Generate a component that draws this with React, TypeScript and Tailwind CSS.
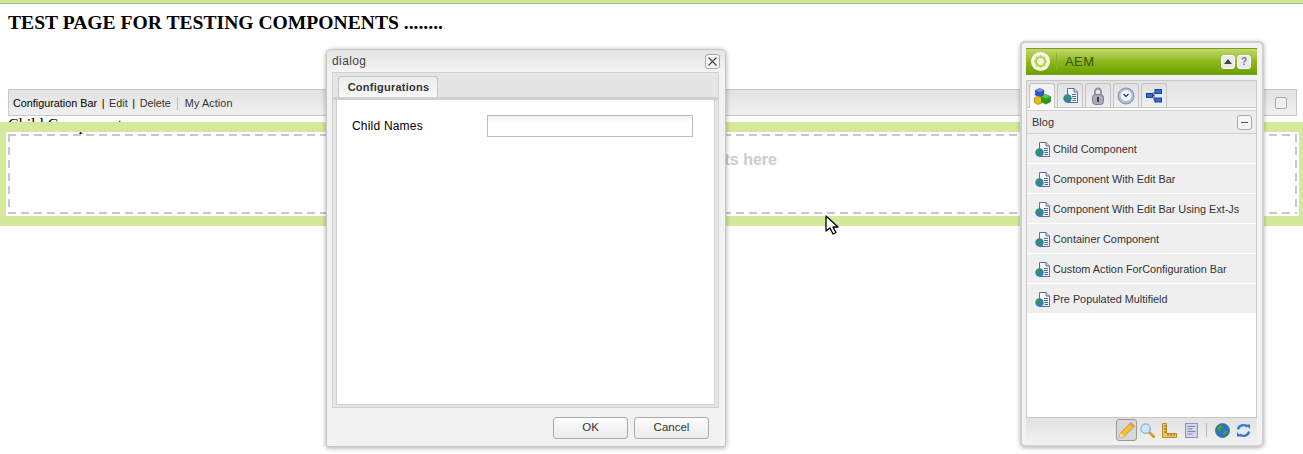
const sans = "font-['Liberation_Sans',Arial,sans-serif]";

function PageGlobe() {
    return (
        <svg width="15" height="15" viewBox="0 0 15 15" className="shrink-0">
            <path d="M4.500.5h6.500l3.500 3.500v10.500h-10z" fill="#f4f7fc" stroke="#5a6f9c" />
            <path d="M11 .5v3.500h3.500" fill="#cdd8ea" stroke="#5a6f9c" />
            <path d="M9 6.500h4M9 8.500h4M9.500 10.500h3.500M9.500 12.500h3.500" stroke="#4c6492" />
            <circle cx="4.500" cy="10.500" r="4.200" fill="#2f7fc4" />
            <path d="M2 8c1.500-1.200 3-.8 4 .2s0 1.800-1 1.800-.8 2-1.800 2-2-2.500-1.200-4zM6 12.500c.8-.8 1.600-1 2.300-.5-.5 1.300-1.300 2.300-2.300 2.500z" fill="#3c9a2e" />
        </svg>
    );
}

function Cubes() {
    return (
        <svg width="17" height="17" viewBox="0 0 18 18">
            <path d="M6 .5 10.500 2.500v5L6 9.500 1.500 7.500v-5z" fill="#2f55c4" stroke="#1f2f7a" strokeWidth=".6" />
            <path d="M1.500 2.500 6 4.500l4.500-2L6 .5z" fill="#6f8fe8" />
            <path d="M4.500 8.500l4.500 2v5l-4.500 2-4-2v-5z" fill="#e8b90f" stroke="#8a6a08" strokeWidth=".6" />
            <path d="M12.500 7 17.500 9v5.500L12.500 17 8 14.500V9z" fill="#2a9c1f" stroke="#14600f" strokeWidth=".6" />
            <path d="M8 9l4.500 2.200L17.500 9l-5-2z" fill="#5ccb4a" />
        </svg>
    );
}

function Lock() {
    return (
        <svg width="12" height="18" viewBox="0 0 12 18">
            <path d="M3 8V4.500a3 3 0 0 1 6 0V8" fill="none" stroke="#8f8f9c" strokeWidth="1.800" />
            <rect x=".5" y="7.500" width="11" height="10" rx="3" fill="#a9a9bb" stroke="#7c7c92" />
            <rect x="5" y="10" width="2" height="5" fill="#3d3d4a" />
        </svg>
    );
}

function Clock() {
    return (
        <svg width="18" height="18" viewBox="0 0 18 18">
            <circle cx="9" cy="9" r="8" fill="#a8bfdb" stroke="#7e93ad" />
            <circle cx="9" cy="8.500" r="5.500" fill="#f2f6fb" />
            <path d="M6.500 7 9 9.500 11.500 7" fill="none" stroke="#27374e" strokeWidth="1.200" />
        </svg>
    );
}

function Network() {
    return (
        <svg width="16" height="14" viewBox="0 0 16 14">
            <path d="M5 6.500h3M8 3v8h2" fill="none" stroke="#1d3f8f" />
            <rect x=".5" y="4.500" width="6" height="4" fill="#2d6fd8" stroke="#174099" />
            <rect x="9" y=".5" width="6.500" height="4" fill="#2d6fd8" stroke="#174099" />
            <rect x="9" y="9" width="6.500" height="4" fill="#2d6fd8" stroke="#174099" />
        </svg>
    );
}

function AemLogo() {
    return (
        <svg width="19" height="19" viewBox="0 0 19 19" className="shrink-0">
            <circle cx="9.500" cy="9.500" r="9.500" fill="#f6f9e8" />
            <circle cx="9.500" cy="9.500" r="5.500" fill="#b4d055" />
            <circle cx="9.500" cy="9.500" r="3.500" fill="#f2f7dc" />
            <path d="M9.500 3v3M9.500 13v3M3 9.500h3M13 9.500h3M5 5l2 2M12 12l2 2M14 5l-2 2M7 12l-2 2" stroke="#b4d055" strokeWidth="1.800" />
        </svg>
    );
}

function Pencil() {
    return (
        <svg width="18" height="18" viewBox="0 0 18 18">
            <path d="M1 17l1.500-5L13 1.500 16.500 5 6 15.500z" fill="#f2c230" stroke="#b98a1a" strokeWidth=".8" />
            <path d="M1 17l1.500-5L6 15.500z" fill="#f6e0b8" />
            <path d="M13 1.500 16.500 5 15 6.500 11.500 3z" fill="#ea8f7a" />
        </svg>
    );
}

function Magnifier() {
    return (
        <svg width="15" height="15" viewBox="0 0 16 16">
            <path d="M9 9l6 6" stroke="#dd9a2a" strokeWidth="3" strokeLinecap="round" />
            <circle cx="6" cy="6" r="5" fill="#cfe6f7" stroke="#8fabc6" strokeWidth="1.300" />
        </svg>
    );
}

function Ruler() {
    return (
        <svg width="15" height="15" viewBox="0 0 15 15">
            <path d="M.5.500h4v10h10v4H.5z" fill="#ecc95e" stroke="#b08a2c" />
            <path d="M2 3h2.500M2 6h2.500M2 9h2.500M6 11v2M9 11v2M12 11v2" stroke="#8a6510" />
        </svg>
    );
}

function Doc() {
    return (
        <svg width="13" height="15" viewBox="0 0 13 15">
            <rect x=".5" y=".5" width="12" height="14" fill="#d4d8ea" stroke="#8d94b8" />
            <path d="M2.500 3.500h8M2.500 6h5M2.500 8.500h8M2.500 11h5" stroke="#7f86a8" />
        </svg>
    );
}

function Globe() {
    return (
        <svg width="15" height="15" viewBox="0 0 16 16">
            <circle cx="8" cy="8" r="7.500" fill="#2a75c7" stroke="#1a4f93" strokeWidth=".6" />
            <path d="M3 4c2-2 4-2 5-1s0 3-1 3-1 3-2 3-3-3-2-5zM9 9c2-1 4-1 5 0-1 3-3 4-4 4s-2-3-1-4z" fill="#46a032" />
        </svg>
    );
}

function Refresh() {
    return (
        <svg width="15" height="15" viewBox="0 0 16 16" fill="none" stroke="#2e7ad1" strokeWidth="2.400">
            <path d="M2 7a6 6 0 0 1 10-3" />
            <path d="M14 9a6 6 0 0 1-10 3" />
            <path d="M10 1.500h5v5z" fill="#2e7ad1" stroke="none" />
            <path d="M6 14.500H1v-5z" fill="#2e7ad1" stroke="none" />
        </svg>
    );
}

function SmallButton({ children }: { children: React.ReactNode }) {
    return (
        <span className="flex items-center justify-center w-[14px] h-[14px] rounded-[3px] border border-[#fff] bg-[#e9e9e9] text-[#555]">
            {children}
        </span>
    );
}

function Tab({ active, children }: { active?: boolean; children: React.ReactNode }) {
    return (
        <div
            className={
                active
                    ? "flex items-center justify-center w-[26px] h-[25px] -mb-px rounded-t-[3px] border border-b-0 border-[#c4c4c4] bg-gradient-to-b from-[#f0f0f0] to-[#ffffff]"
                    : "flex items-center justify-center w-[26px] h-[24px] rounded-t-[3px] border border-b-0 border-[#c4c4c4] bg-gradient-to-b from-[#e2e2e2] to-[#efefef]"
            }
        >
            {children}
        </div>
    );
}

function Dialog() {
    return (
        <div className={`absolute left-[326px] top-[49px] w-[400px] h-[398px] flex flex-col rounded-t-[5px] rounded-b-[2px] border border-[#c6c6c6] bg-[#f2f2f2] shadow-[0_1px_5px_rgba(0,0,0,0.35)] ${sans}`}>
            <div className="flex shrink-0 items-center justify-between h-[22px] px-[5px] bg-gradient-to-b from-[#e4e4e4] to-[#f4f4f4] rounded-t-[5px]">
                <span className="text-[12px] text-[#444] tracking-[0.4px]">dialog</span>
                <span className="flex items-center justify-center w-[15px] h-[15px] rounded-[3px] border border-[#aaa] bg-[#f4f4f4]">
                    <svg width="9" height="9" viewBox="0 0 9 9">
                        <path d="M.5.500l8 8M8.500.500l-8 8" stroke="#444" strokeWidth="1.100" />
                    </svg>
                </span>
            </div>
            <div className="flex flex-col flex-1 ml-[5px] mr-[6px] border border-[#d2d2d2] bg-[#e5e5e5]">
                <div className="flex shrink-0 h-[27px] pl-[5px] pt-[3px] border-b-[3px] border-[#d0d0d0]">
                    <div className="flex items-center justify-center w-[100px] h-[21px] pl-px rounded-t-[3px] border border-b-0 border-[#c6c6c6] bg-gradient-to-b from-[#eeeeee] to-[#f8f8f8] text-[11px] font-bold tracking-[0.25px] text-[#333]">
                        Configurations
                    </div>
                </div>
                <div className="flex flex-1 items-start mx-[3px] mb-[2px] border-x border-b border-[#d0d0d0] bg-white pt-[15px] pl-[15px]">
                    <label className="w-[135px] pt-[2px] text-[12px] tracking-[0.2px] text-black">Child Names</label>
                    <div className="w-[206px] h-[22px] border border-[#bdbdbd] bg-gradient-to-b from-[#efefef] to-[#ffffff] to-30%" />
                </div>
            </div>
            <div className="flex shrink-0 justify-end gap-[6px] h-[38px] pt-[9px] pr-[16px]">
                <button className="w-[75px] h-[22px] rounded-[3px] border border-[#aaa] bg-gradient-to-b from-[#fbfbfb] to-[#ececec] text-[11.500px] text-[#333]">OK</button>
                <button className="w-[75px] h-[22px] rounded-[3px] border border-[#aaa] bg-gradient-to-b from-[#fbfbfb] to-[#ececec] text-[11.500px] text-[#333]">Cancel</button>
            </div>
        </div>
    );
}

const components = [
    "Child Component",
    "Component With Edit Bar",
    "Component With Edit Bar Using Ext-Js",
    "Container Component",
    "Custom Action ForConfiguration Bar",
    "Pre Populated Multifield",
];

function Sidekick() {
    return (
        <div className={`absolute left-[1020px] top-[41px] w-[244px] h-[406px] flex flex-col rounded-[5px] border-2 border-[#cfcfcf] bg-[#f2f2f2] pl-[4px] pr-[5px] pt-[5px] shadow-[0_1px_4px_rgba(0,0,0,0.3)] ${sans}`}>
            <div className="flex shrink-0 items-center h-[27px] pl-[5px] pr-[6px] border-y border-[#7a9a24] bg-gradient-to-b from-[#c2d968] via-[#8fb81a] via-50% to-[#6d9f00]">
                <AemLogo />
                <span className="ml-[6px] w-px h-[17px] bg-[#8fae35]" />
                <span className="ml-[8px] flex-1 text-[13px] tracking-[0.4px] text-[#2f5600]">AEM</span>
                <div className="flex gap-[2px]">
                    <SmallButton>
                        <svg width="8" height="5" viewBox="0 0 8 5">
                            <path d="M0 5l4-5 4 5z" fill="#444" />
                        </svg>
                    </SmallButton>
                    <SmallButton>
                        <span className="text-[10px] font-bold leading-none text-[#777]">?</span>
                    </SmallButton>
                </div>
            </div>
            <div className="flex flex-col shrink-0 mt-[5px] h-[337px] border-x border-t border-[#c8c8c8] bg-white">
                <div className="flex shrink-0 items-end gap-[2px] h-[27px] pl-[2px] bg-gradient-to-b from-[#e4e4e4] to-[#ededed] border-b border-[#c8c8c8]">
                    <Tab active><Cubes /></Tab>
                    <Tab><PageGlobe /></Tab>
                    <Tab><Lock /></Tab>
                    <Tab><Clock /></Tab>
                    <Tab><Network /></Tab>
                </div>
                <div className="flex shrink-0 items-center justify-between h-[24px] mt-[2px] pl-[5px] pr-[4px] border-y border-[#d0d0d0] bg-[#ececec] text-[11px] text-[#333]">
                    <span>Blog</span>
                    <span className="flex items-center justify-center w-[15px] h-[15px] rounded-[3px] border border-[#aaa] bg-[#f6f6f6]">
                        <span className="block w-[7px] h-px bg-[#555]" />
                    </span>
                </div>
                <ul className="bg-white">
                    {components.map((name) => (
                        <li key={name} className="flex items-center gap-[3px] h-[30px] pl-[8px] pt-px border-b border-white bg-[#efefef] text-[10.850px] text-[#333]">
                            <PageGlobe />
                            <span>{name}</span>
                        </li>
                    ))}
                </ul>
            </div>
            <div className="flex shrink-0 items-center justify-end h-[25px] pr-[6px] border-t border-[#c8c8c8] bg-gradient-to-b from-[#e2e2e2] to-[#f0f0f0]">
                <span className="flex items-center justify-center w-[21px] h-[22px] rounded-[3px] border border-[#999] bg-[#d8d8d8]"><Pencil /></span>
                <span className="ml-[3px]"><Magnifier /></span>
                <span className="ml-[7px]"><Ruler /></span>
                <span className="ml-[8px]"><Doc /></span>
                <span className="mx-[8px] w-px h-[14px] bg-[#bbb]" />
                <Globe />
                <span className="ml-[6px]"><Refresh /></span>
            </div>
        </div>
    );
}

export default function App() {
    return (
        <div className="relative w-[1303px] h-[454px] overflow-hidden bg-white">
            <div className="h-[4px] bg-[#cfe891] border-b border-[#a9b58a]" />
            <h1 className="mt-[8px] ml-[8px] font-['Liberation_Serif',serif] text-[19.600px] leading-[22px] font-bold text-black">
                TEST PAGE FOR TESTING COMPONENTS ........
            </h1>
            <div className={`flex items-center justify-between mt-[55px] ml-[8px] mr-[6px] h-[27px] pl-[4px] pr-[9px] border border-[#c8c8c8] bg-gradient-to-b from-[#e2e2e2] to-[#f0f0f0] text-[10.800px] text-[#333] ${sans}`}>
                <div className="flex items-center pt-px">
                    <span className="text-black">Configuration Bar</span>
                    <span className="mx-[4.600px] text-black">|</span>
                    <span>Edit</span>
                    <span className="mx-[4.600px] text-black">|</span>
                    <span>Delete</span>
                    <span className="ml-[6px] mr-[7px] w-px h-[13px] bg-[#bbb]" />
                    <span className="tracking-[0.1px]">My Action</span>
                </div>
                <span className="w-[12px] h-[12px] rounded-[2px] border border-[#aaa] bg-[#eee]" />
            </div>
            <p className="ml-[8px] font-['Liberation_Serif',serif] text-[16px] leading-[18px] text-black">Child Component</p>
            <div className="relative -mt-[12px] h-[104px] border-l-[6px] border-r-[4px] border-y-[10px] border-[#d4e99a] p-[2px]">
                <div className="flex items-start justify-center h-full pt-[17px] [background-image:linear-gradient(90deg,#c8c8c8_8px,transparent_8px),linear-gradient(90deg,#c8c8c8_8px,transparent_8px),linear-gradient(#c8c8c8_8px,transparent_8px),linear-gradient(#c8c8c8_8px,transparent_8px)] [background-size:13px_2px,13px_2px,2px_13px,2px_13px] [background-position:0_0,0_100%,0_0,100%_0] [background-repeat:repeat-x,repeat-x,repeat-y,repeat-y]">
                    <span className={`text-[16px] leading-[18px] font-bold text-[#ccc] ${sans}`}>Drag components or assets here</span>
                </div>
            </div>
            <Dialog />
            <Sidekick />
            <svg width="14" height="21" viewBox="0 0 14 21" className="absolute left-[825px] top-[215px]">
                <path d="M1 1v15l4-3 3 6 3-1.500-3-5.500h5z" fill="#fff" stroke="#000" strokeWidth="1.300" strokeLinejoin="round" />
            </svg>
        </div>
    );
}
